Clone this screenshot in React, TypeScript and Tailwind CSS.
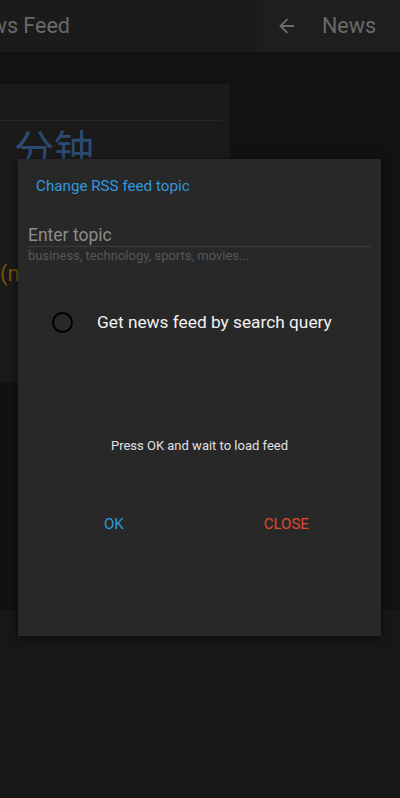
import { ArrowLeft } from "lucide-react";

const font = { fontFamily: "Roboto, 'Noto Sans CJK SC', sans-serif" };

/** Dimmed feed screen behind the dialog. */
function Backdrop() {
  return (
    <div className="flex h-[798px] w-[400px] flex-col overflow-hidden bg-[#171717]">
      <div className="flex h-[52px] shrink-0">
        <div className="flex w-[257px] items-center overflow-hidden bg-[#1b1b1b]">
          <span className="ml-[-36px] whitespace-nowrap text-[21.5px] text-[#6a6a6a]">
            News Feed
          </span>
        </div>
        <div className="flex flex-1 items-center bg-[#1e1e1e]">
          <ArrowLeft className="ml-[19px] h-[22px] w-[22px] text-[#6a6a6a]" strokeWidth={2} />
          <span className="ml-[24px] text-[21.5px] text-[#6a6a6a]">News</span>
        </div>
      </div>

      <div className="h-[558px] shrink-0 bg-[#121212] pt-[32px]">
        <div className="h-[298px] w-[230px] bg-[#1a1a1a]">
          <div className="h-[37px] w-[222px] border-b border-[#262626]" />
          <p className="ml-[14px] mt-[6px] text-[40px] leading-[48px] text-[#2d4a70]">分钟</p>
          <p className="mt-[86px] text-[22px] leading-[26px] text-[#7a5009]">(n</p>
        </div>
      </div>
    </div>
  );
}

export default function App() {
  return (
    <div className="relative h-[798px] w-[400px] overflow-hidden" style={font}>
      <Backdrop />

      <div className="absolute left-[18px] top-[159px] h-[477px] w-[363px] bg-[#282828] shadow-[0_2px_8px_rgba(0,0,0,0.6)]">
        <div className="flex flex-col">
          <h2 className="ml-[18px] mt-[18px] text-[15.2px] leading-[18px] text-[#3197df]">
            Change RSS feed topic
          </h2>

          <div className="mx-[10px] mt-[30px]">
            <div className="border-b border-[#3c3c3c] text-[17.5px] leading-[21px] text-[#8c8c8c]">
              Enter topic
            </div>
            <p className="mt-[1px] text-[13px] leading-[16px] text-[#575757]">
              business, technology, sports, movies...
            </p>
          </div>

          <div className="mt-[47px] flex items-center">
            <span className="ml-[34px] h-[21px] w-[21px] rounded-full border-2 border-black" />
            <span className="ml-[24px] text-[17.3px] leading-[22px] text-[#f2f2f2]">
              Get news feed by search query
            </span>
          </div>

          <p className="mt-[105px] text-center text-[13px] leading-[16px] text-[#e0e0e0]">
            Press OK and wait to load feed
          </p>

          <div className="mt-[61px] flex">
            <button className="ml-[86px] text-[15px] leading-[18px] text-[#3197df]">OK</button>
            <button className="ml-[140px] text-[15px] leading-[18px] text-[#e0482b]">CLOSE</button>
          </div>
        </div>
      </div>
    </div>
  );
}
